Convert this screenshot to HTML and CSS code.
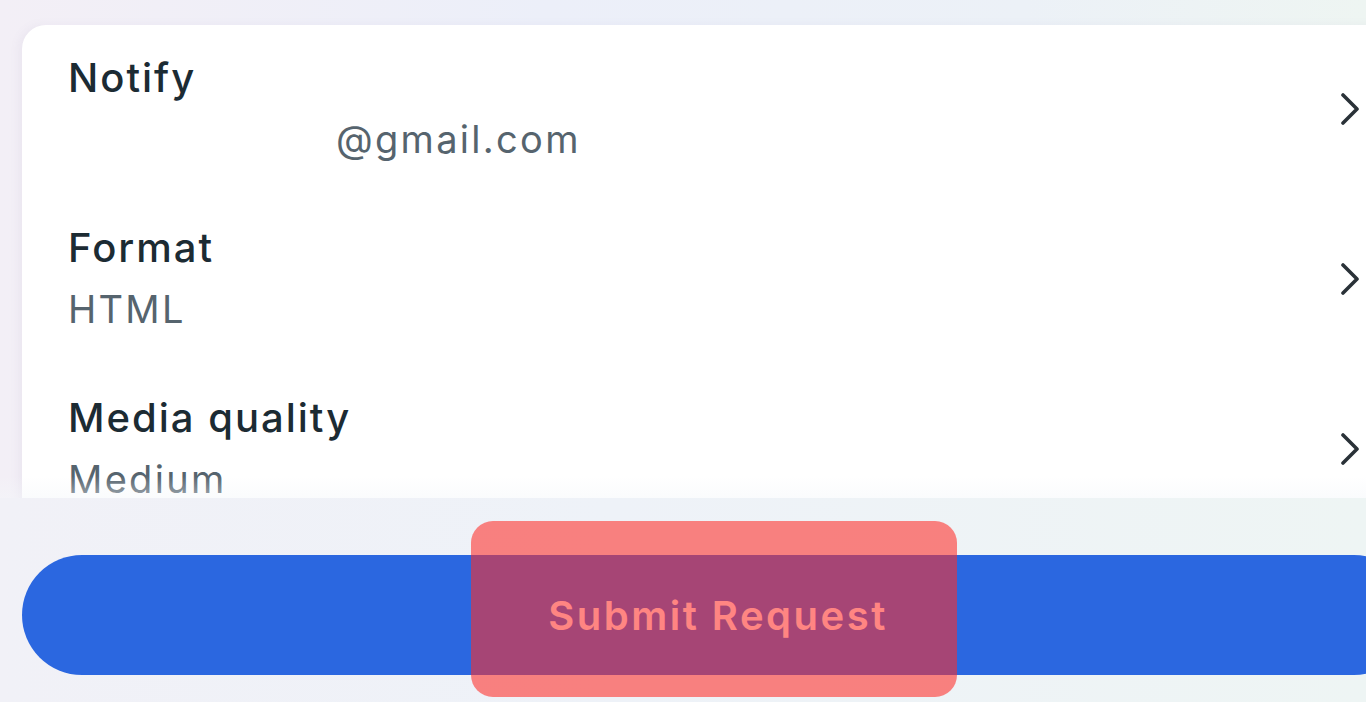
FILE: index.html
```html
<!DOCTYPE html>
<html lang="en">
<head>
<meta charset="utf-8">
<title>Submit Request</title>
<link rel="stylesheet" href="styles.css">
</head>
<body>
<div class="page">
  <main class="content">
    <section class="card">
      <div class="row">
        <div class="text">
          <div class="label">Notify</div>
          <div class="value"><span class="redacted"></span>@gmail.com</div>
        </div>
        <svg class="chev" viewBox="0 0 20 32" aria-hidden="true"><path d="M3 2 L17 16 L3 30" /></svg>
      </div>
      <div class="row">
        <div class="text">
          <div class="label">Format</div>
          <div class="value">HTML</div>
        </div>
        <svg class="chev" viewBox="0 0 20 32" aria-hidden="true"><path d="M3 2 L17 16 L3 30" /></svg>
      </div>
      <div class="row">
        <div class="text">
          <div class="label">Media quality</div>
          <div class="value">Medium</div>
        </div>
        <svg class="chev" viewBox="0 0 20 32" aria-hidden="true"><path d="M3 2 L17 16 L3 30" /></svg>
      </div>
    </section>
  </main>
  <footer class="footer">
    <button class="submit">Submit Request</button>
    <div class="highlight"></div>
  </footer>
</div>
</body>
</html>
```

FILE: styles.css
```css
* { box-sizing: border-box; }
html, body {
  margin: 0;
  padding: 0;
  width: 1366px;
  height: 702px;
  overflow: hidden;
}
body {
  font-family: "Inter", "Noto Sans", sans-serif;
  background: linear-gradient(90deg, #f3eff6 0%, #eceff9 40%, #ecf1f7 75%, #eef5f2 100%);
}
.page {
  height: 702px;
  display: flex;
  flex-direction: column;
  position: relative;
}
.content {
  flex: 1;
  min-height: 0;
  padding: 25px 0 0 22px;
  overflow: hidden;
}
.card {
  width: 1400px;
  height: 600px;
  background: #ffffff;
  border-radius: 24px 0 0 0;
  box-shadow: -4px 0 10px rgba(120, 110, 150, 0.06);
  padding: 27px 0 0 46px;
  display: flex;
  flex-direction: column;
}
.row {
  height: 170px;
  display: flex;
  align-items: flex-start;
  justify-content: space-between;
  width: 1292px;
}
.text {
  display: flex;
  flex-direction: column;
}
.label {
  font-size: 40px;
  font-weight: 500;
  color: #1c2b33;
  line-height: 52px;
  letter-spacing: 2px;
}
.value {
  font-size: 38px;
  font-weight: 400;
  color: #56646e;
  line-height: 50px;
  margin-top: 10px;
  letter-spacing: 2.3px;
}
.redacted {
  display: inline-block;
  width: 268px;
}
.chev {
  width: 20px;
  height: 32px;
  margin-top: 41px;
  fill: none;
  stroke: #2a3238;
  stroke-width: 3.6;
  stroke-linecap: round;
  stroke-linejoin: round;
}
.footer {
  height: 204px;
  flex: 0 0 204px;
  position: relative;
  background: linear-gradient(90deg, #f1f1f7 0%, #eef2f8 45%, #eef5f4 100%);
  padding: 57px 0 0 22px;
}
.footer::before {
  content: "";
  position: absolute;
  left: 0;
  right: 0;
  top: -22px;
  height: 22px;
  background: linear-gradient(180deg, rgba(255,255,255,0) 0%, rgba(244,247,250,0.45) 100%);
}
.submit {
  display: block;
  width: 1392px;
  height: 120px;
  border: none;
  border-radius: 60px;
  background: #2b67e0;
  color: #ffffff;
  font-family: "Inter", "Noto Sans", sans-serif;
  font-size: 40px;
  font-weight: 600;
  letter-spacing: 2.5px;
  padding: 0;
}
.highlight {
  position: absolute;
  left: 471px;
  top: 23px;
  width: 486px;
  height: 176px;
  border-radius: 22px;
  background: rgba(255, 45, 40, 0.58);
}
```
